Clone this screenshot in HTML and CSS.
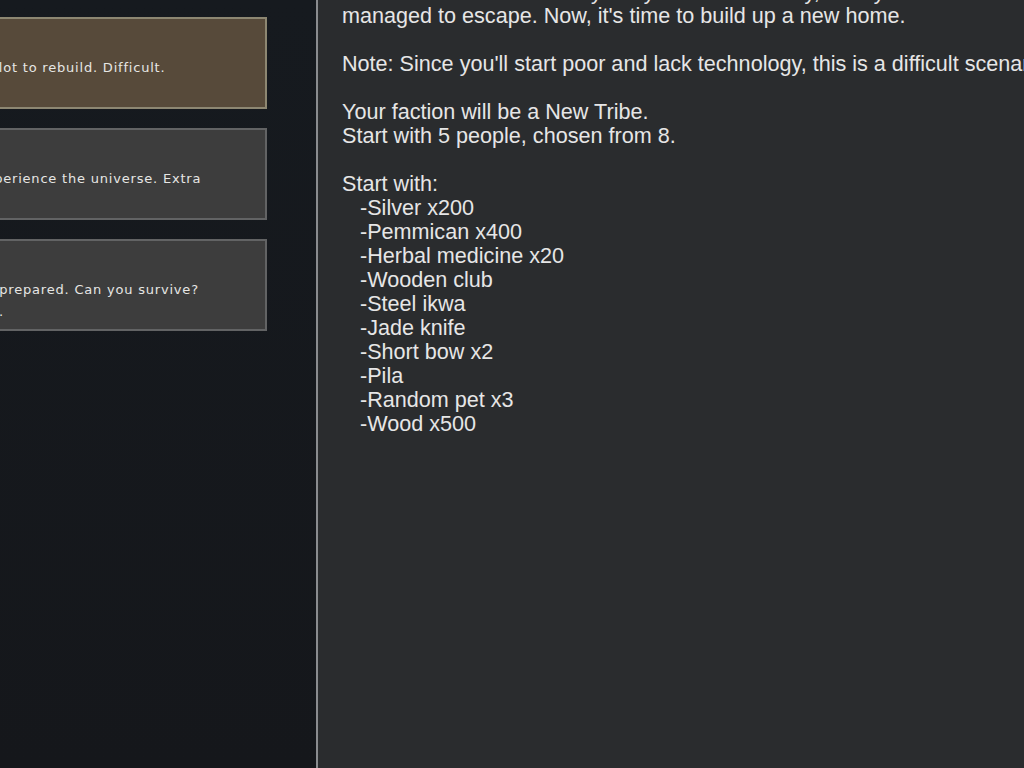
FILE: index.html
```html
<!DOCTYPE html>
<html lang="en">
<head>
<meta charset="utf-8">
<title>Scenario</title>
<link rel="stylesheet" href="styles.css">
</head>
<body>
<div class="screen">
  <aside class="side">
    <div class="card card-selected">
      <div class="card-title">Rebuild</div>
      <div class="card-desc">You lost everything in a great disaster, but still have a small plot to rebuild. Difficult.</div>
    </div>
    <div class="card">
      <div class="card-title">Peaceful</div>
      <div class="card-desc">A relaxed start where you have plenty of time to learn and experience the universe. Extra
starting items.</div>
    </div>
    <div class="card">
      <div class="card-title">Hardcore</div>
      <div class="card-desc">You wake up alone in a harsh land, with nothing and totally unprepared. Can you survive?
Only for veterans who know the game well. Extremely difficult.</div>
    </div>
  </aside>
  <main class="detail">
    <div class="story">Your old home was destroyed by a terrible enemy, but by a stroke of luck you and your group
managed to escape. Now, it's time to build up a new home.

Note: Since you'll start poor and lack technology, this is a difficult scenario.

Your faction will be a New Tribe.
Start with 5 people, chosen from 8.

Start with:
   -Silver x200
   -Pemmican x400
   -Herbal medicine x20
   -Wooden club
   -Steel ikwa
   -Jade knife
   -Short bow x2
   -Pila
   -Random pet x3
   -Wood x500</div>
  </main>
</div>
</body>
</html>
```

FILE: styles.css
```css
html, body {
  margin: 0;
  padding: 0;
  width: 1024px;
  height: 768px;
  overflow: hidden;
  background: #2a2c2e;
}

.screen {
  display: flex;
  height: 768px;
}

.side {
  flex: 0 0 793px;
  margin-left: -477px;
  box-sizing: border-box;
  padding: 17px 49px 0 0;
  background: linear-gradient(#161a1f, #15171b);
  display: flex;
  flex-direction: column;
  gap: 19px;
  font-family: "DejaVu Sans", Verdana, sans-serif;
  font-size: 13px;
  letter-spacing: 0.8px;
  color: #e6e6e4;
}

.card {
  height: 92px;
  box-sizing: border-box;
  border: 2px solid #626364;
  background: #3d3d3d;
  padding: 16px 0 0 19px;
  line-height: 22px;
  overflow: hidden;
}

.card-selected {
  background: #574a3a;
  border-color: #8d8772;
}

.card-title {
  font-weight: bold;
  white-space: nowrap;
}

.card-desc {
  white-space: pre;
}

.detail {
  flex: 0 0 auto;
  width: 900px;
  border-left: 2px solid #8a8c8f;
  background: #2a2c2e;
  padding-left: 24px;
  overflow: hidden;
}

.story {
  margin-top: -20px;
  font-family: "Liberation Sans", Arial, sans-serif;
  font-size: 21.6px;
  line-height: 24px;
  color: #e6e6e6;
  white-space: pre;
}
```
